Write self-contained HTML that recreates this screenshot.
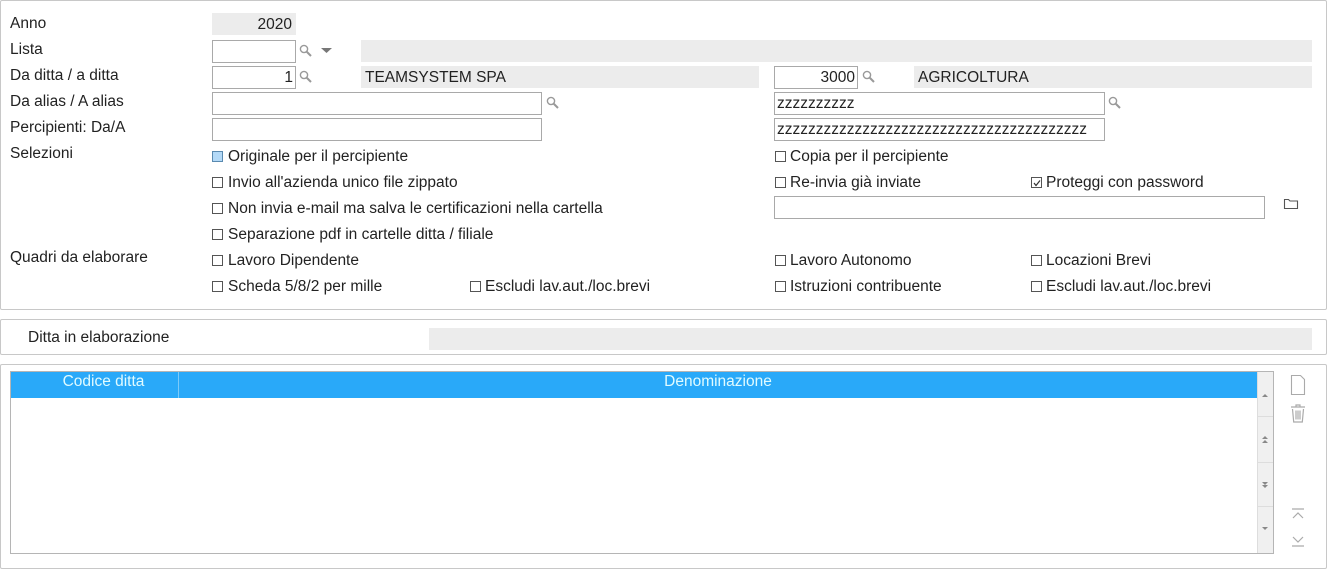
<!DOCTYPE html>
<html><head><meta charset="utf-8"><style>
*{box-sizing:border-box;margin:0;padding:0}
body{width:1327px;height:569px;background:#fff;font-family:"Liberation Sans",Arial,sans-serif;font-size:15.5px;color:#222;position:relative;overflow:hidden}
.a{position:absolute}
.panel{position:absolute;border:1px solid #c8c8c8;border-radius:2px;background:#fff}
.lbl{position:absolute;left:10px;line-height:18px}
.in{position:absolute;height:23px;border:1px solid #a9a9a9;background:#fff;line-height:22px;padding:0 2px}
.ro{position:absolute;height:22px;background:#ececec;line-height:23px;padding:0 4px}
.r{text-align:right}
.cb{position:absolute;width:11px;height:11px;border:1px solid #555;background:#fff}
.cl{position:absolute;line-height:18px}
.ico{position:absolute}
</style></head><body>
<div class="panel" style="left:0;top:0;width:1327px;height:310px"></div>
<div class="panel" style="left:0;top:319px;width:1327px;height:36px"></div>
<div class="panel" style="left:0;top:364px;width:1327px;height:205px"></div>

<div class="lbl" style="top:15px">Anno</div>
<div class="lbl" style="top:41px">Lista</div>
<div class="lbl" style="top:67px">Da ditta / a ditta</div>
<div class="lbl" style="top:93px">Da alias / A alias</div>
<div class="lbl" style="top:119px">Percipienti: Da/A</div>
<div class="lbl" style="top:145px">Selezioni</div>
<div class="lbl" style="top:249px">Quadri da elaborare</div>

<div class="ro r" style="left:212px;top:13px;width:84px">2020</div>
<div class="in" style="left:212px;top:40px;width:84px"></div>
<svg class="ico" style="left:299px;top:44px" width="14" height="14"><circle cx="5" cy="5" r="3.6" fill="none" stroke="#999" stroke-width="1.4"/><line x1="7.5" y1="7.5" x2="12" y2="12" stroke="#999" stroke-width="2"/></svg>
<svg class="ico" style="left:321px;top:47px" width="12" height="8"><path d="M0 1h11l-5.5 5z" fill="#777"/></svg>
<div class="ro" style="left:361px;top:40px;width:951px"></div>

<div class="in r" style="left:212px;top:66px;width:84px">1</div>
<svg class="ico" style="left:299px;top:70px" width="14" height="14"><circle cx="5" cy="5" r="3.6" fill="none" stroke="#999" stroke-width="1.4"/><line x1="7.5" y1="7.5" x2="12" y2="12" stroke="#999" stroke-width="2"/></svg>
<div class="ro" style="left:361px;top:66px;width:398px">TEAMSYSTEM SPA</div>
<div class="in r" style="left:774px;top:66px;width:84px">3000</div>
<svg class="ico" style="left:862px;top:70px" width="14" height="14"><circle cx="5" cy="5" r="3.6" fill="none" stroke="#999" stroke-width="1.4"/><line x1="7.5" y1="7.5" x2="12" y2="12" stroke="#999" stroke-width="2"/></svg>
<div class="ro" style="left:914px;top:66px;width:398px">AGRICOLTURA</div>

<div class="in" style="left:212px;top:92px;width:330px"></div>
<svg class="ico" style="left:546px;top:96px" width="14" height="14"><circle cx="5" cy="5" r="3.6" fill="none" stroke="#999" stroke-width="1.4"/><line x1="7.5" y1="7.5" x2="12" y2="12" stroke="#999" stroke-width="2"/></svg>
<div class="in" style="left:774px;top:92px;width:331px">zzzzzzzzzz</div>
<svg class="ico" style="left:1108px;top:96px" width="14" height="14"><circle cx="5" cy="5" r="3.6" fill="none" stroke="#999" stroke-width="1.4"/><line x1="7.5" y1="7.5" x2="12" y2="12" stroke="#999" stroke-width="2"/></svg>

<div class="in" style="left:212px;top:118px;width:330px"></div>
<div class="in" style="left:774px;top:118px;width:331px;overflow:hidden;white-space:nowrap">zzzzzzzzzzzzzzzzzzzzzzzzzzzzzzzzzzzzzzzz</div>

<div class="cb" style="left:212px;top:151px;background:#b3d9f7;border-color:#5a8ab0"></div><div class="cl" style="left:228px;top:148px">Originale per il percipiente</div>
<div class="cb" style="left:775px;top:151px"></div><div class="cl" style="left:790px;top:148px">Copia per il percipiente</div>

<div class="cb" style="left:212px;top:177px"></div><div class="cl" style="left:228px;top:174px">Invio all'azienda unico file zippato</div>
<div class="cb" style="left:775px;top:177px"></div><div class="cl" style="left:790px;top:174px">Re-invia già inviate</div>
<div class="cb" style="left:1031px;top:177px"></div><svg class="ico" style="left:1032px;top:178px" width="10" height="10"><path d="M2 5l2 2.5 4-5" fill="none" stroke="#333" stroke-width="1.2"/></svg><div class="cl" style="left:1046px;top:174px">Proteggi con password</div>

<div class="cb" style="left:212px;top:203px"></div><div class="cl" style="left:228px;top:200px">Non invia e-mail ma salva le certificazioni nella cartella</div>
<div class="in" style="left:774px;top:196px;width:491px"></div>
<svg class="ico" style="left:1283px;top:197px" width="16" height="14"><path d="M1.5 2.5h4l1.5 1.5h7.5v7.5h-13z" fill="none" stroke="#555" stroke-width="1.1"/></svg>

<div class="cb" style="left:212px;top:229px"></div><div class="cl" style="left:228px;top:226px">Separazione pdf in cartelle ditta / filiale</div>

<div class="cb" style="left:212px;top:255px"></div><div class="cl" style="left:228px;top:252px">Lavoro Dipendente</div>
<div class="cb" style="left:775px;top:255px"></div><div class="cl" style="left:790px;top:252px">Lavoro Autonomo</div>
<div class="cb" style="left:1031px;top:255px"></div><div class="cl" style="left:1046px;top:252px">Locazioni Brevi</div>

<div class="cb" style="left:212px;top:281px"></div><div class="cl" style="left:228px;top:278px">Scheda 5/8/2 per mille</div>
<div class="cb" style="left:470px;top:281px"></div><div class="cl" style="left:485px;top:278px">Escludi lav.aut./loc.brevi</div>
<div class="cb" style="left:775px;top:281px"></div><div class="cl" style="left:790px;top:278px">Istruzioni contribuente</div>
<div class="cb" style="left:1031px;top:281px"></div><div class="cl" style="left:1046px;top:278px">Escludi lav.aut./loc.brevi</div>

<div class="cl" style="left:28px;top:329px">Ditta in elaborazione</div>
<div class="ro" style="left:429px;top:328px;width:883px"></div>

<div class="a" style="left:10px;top:371px;width:1264px;height:183px;border:1px solid #b5b5b5"></div>
<div class="a" style="left:11px;top:372px;width:1246px;height:26px;background:#29a9f9"></div>
<div class="a" style="left:178px;top:372px;width:1px;height:26px;background:#7ccaf9"></div>
<div class="cl" style="left:20px;top:373px;width:167px;text-align:center;color:#e0fbff">Codice ditta</div>
<div class="cl" style="left:179px;top:373px;width:1078px;text-align:center;color:#e0fbff">Denominazione</div>
<div class="a" style="left:1257px;top:372px;width:16px;height:181px;background:#f0f0f0;border-left:1px solid #ddd"></div>
<div class="a" style="left:1257px;top:416px;width:16px;height:1px;background:#ddd"></div>
<div class="a" style="left:1257px;top:462px;width:16px;height:1px;background:#ddd"></div>
<div class="a" style="left:1257px;top:506px;width:16px;height:1px;background:#ddd"></div>
<svg class="ico" style="left:1261px;top:392px" width="8" height="6"><path d="M1 5h6l-3-3z" fill="#888"/></svg>
<svg class="ico" style="left:1261px;top:435px" width="8" height="10"><path d="M1 4h6l-3-3zM1 8h6l-3-3z" fill="#888"/></svg>
<svg class="ico" style="left:1261px;top:480px" width="8" height="10"><path d="M1 2h6l-3 3zM1 5h6l-3 3z" fill="#888"/></svg>
<svg class="ico" style="left:1261px;top:526px" width="8" height="6"><path d="M1 1h6l-3 3z" fill="#888"/></svg>

<svg class="ico" style="left:1289px;top:374px" width="18" height="22"><path d="M2.5 1.5h9l4 4v15h-13z" fill="none" stroke="#aaa" stroke-width="1.1"/></svg>
<svg class="ico" style="left:1288px;top:402px" width="20" height="22"><path d="M3 5h14M8 5V3h4v2M4.5 7l1.2 13h8.6l1.2-13M8 8.5v9M10 8.5v9M12 8.5v9" fill="none" stroke="#aaa" stroke-width="1.2"/></svg>
<svg class="ico" style="left:1290px;top:507px" width="16" height="14"><path d="M2 2h12M3 11l5-5 5 5" fill="none" stroke="#aaa" stroke-width="1.2"/></svg>
<svg class="ico" style="left:1290px;top:534px" width="16" height="14"><path d="M3 3l5 5 5-5M2 12h12" fill="none" stroke="#aaa" stroke-width="1.2"/></svg>
</body></html>
